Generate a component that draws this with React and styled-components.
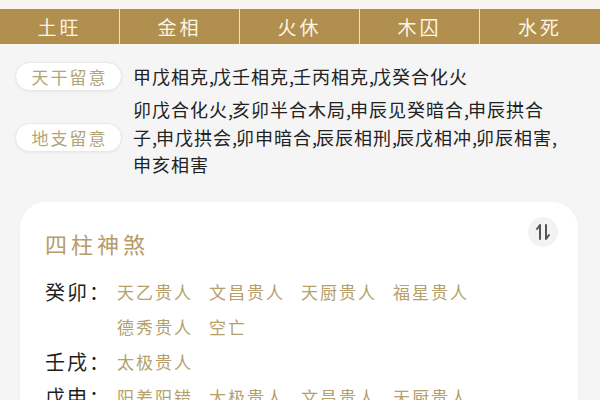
import React from 'react';
import styled, { createGlobalStyle } from 'styled-components';

const GlobalStyle = createGlobalStyle`
  html, body {
    margin: 0;
    padding: 0;
    background: #f5f5f5;
  }
  body {
    font-family: "Noto Sans CJK SC", "Noto Sans", sans-serif;
    color: #333;
  }
`;

const seasons = ['土旺', '金相', '火休', '木囚', '水死'];

const notes = [
  { label: '天干留意', text: '甲戊相克,戊壬相克,壬丙相克,戊癸合化火' },
  {
    label: '地支留意',
    text: '卯戊合化火,亥卯半合木局,申辰见癸暗合,申辰拱合子,申戊拱会,卯申暗合,辰辰相刑,辰戊相冲,卯辰相害,申亥相害',
  },
];

const pillars = [
  { stem: '癸卯', stars: ['天乙贵人', '文昌贵人', '天厨贵人', '福星贵人', '德秀贵人', '空亡'] },
  { stem: '壬戌', stars: ['太极贵人'] },
  { stem: '戊申', stars: ['阳差阳错', '太极贵人', '文昌贵人', '天厨贵人'] },
];

const Page = styled.div`
  width: 600px;
  height: 400px;
  overflow: hidden;
`;

const TopStrip = styled.div`
  height: 9px;
  background: #f7f4f1;
`;

const SeasonBar = styled.div`
  display: grid;
  grid-template-columns: repeat(5, 1fr);
  height: 35px;
  background: #b08f4f;
`;

const SeasonCell = styled.div`
  display: flex;
  align-items: center;
  justify-content: center;
  color: #fdf5e2;
  font-size: 19px;
  letter-spacing: 3px;
  border-right: 1px solid #efe0bb;
  &:last-child {
    border-right: none;
  }
`;

const Notes = styled.div`
  display: flex;
  flex-direction: column;
  gap: 5px;
  padding: 18px 0 0 15px;
`;

const NoteRow = styled.div`
  display: flex;
  align-items: center;
  gap: 11px;
`;

const Pill = styled.div`
  flex: none;
  width: 107px;
  height: 29px;
  box-sizing: border-box;
  display: flex;
  align-items: center;
  justify-content: center;
  border-radius: 15px;
  background: #fff;
  border: 1px solid #e8e8e8;
  box-shadow: 0 1px 3px rgba(0, 0, 0, 0.05);
  color: #b3a57a;
  font-size: 17px;
  letter-spacing: 2px;
  padding-left: 2px;
`;

const NoteText = styled.div`
  max-width: 431px;
  font-size: 18px;
  letter-spacing: 1px;
  line-height: 27.5px;
  color: #222;
`;

const Comma = styled.span`
  letter-spacing: -1px;
`;

const Card = styled.div`
  margin: 23px 22px 0 20px;
  padding: 26px 20px 0 25px;
  background: #fff;
  border-radius: 26px;
  box-shadow: 0 1px 4px rgba(0, 0, 0, 0.03);
  min-height: 300px;
`;

const CardHead = styled.div`
  display: flex;
  justify-content: space-between;
  align-items: flex-start;
  margin-bottom: 16px;
`;

const CardTitle = styled.div`
  font-size: 22px;
  letter-spacing: 4px;
  line-height: 30px;
  color: #b59c68;
`;

const SortButton = styled.button`
  width: 30px;
  height: 30px;
  margin-top: -11px;
  border: none;
  padding: 0;
  border-radius: 50%;
  background: #f3f3f3;
  display: flex;
  align-items: center;
  justify-content: center;
`;

const PillarRow = styled.div`
  display: flex;
  align-items: flex-start;
`;

const Stem = styled.div`
  flex: none;
  width: 72px;
  font-size: 20px;
  letter-spacing: 2px;
  line-height: 35px;
  color: #1e1e1e;
`;

const Stars = styled.div`
  display: flex;
  flex-wrap: wrap;
  column-gap: 16px;
  max-width: 380px;
`;

const Star = styled.span`
  font-size: 17px;
  letter-spacing: 2px;
  line-height: 35px;
  color: #b5a06c;
`;

const HarpoonIcon = () => (
  <svg width="16" height="18" viewBox="0 0 16 18" fill="none" stroke="#555" strokeWidth="2" strokeLinecap="round" strokeLinejoin="round">
    <path d="M5 2v14M5 2L2 6" />
    <path d="M11 2v14M11 16l3-4" />
  </svg>
);

// commas sit a bit tighter than the characters around them
const withCommas = (text) =>
  text.split(',').map((part, i, all) => (
    <React.Fragment key={i}>
      {part}
      {i < all.length - 1 && <Comma>,</Comma>}
    </React.Fragment>
  ));

export default function App() {
  return (
    <Page>
      <GlobalStyle />
      <TopStrip />
      <SeasonBar>
        {seasons.map((s) => (
          <SeasonCell key={s}>{s}</SeasonCell>
        ))}
      </SeasonBar>
      <Notes>
        {notes.map((n) => (
          <NoteRow key={n.label}>
            <Pill>{n.label}</Pill>
            <NoteText>{withCommas(n.text)}</NoteText>
          </NoteRow>
        ))}
      </Notes>
      <Card>
        <CardHead>
          <CardTitle>四柱神煞</CardTitle>
          <SortButton aria-label="排序">
            <HarpoonIcon />
          </SortButton>
        </CardHead>
        {pillars.map((p) => (
          <PillarRow key={p.stem}>
            <Stem>{p.stem}：</Stem>
            <Stars>
              {p.stars.map((s) => (
                <Star key={s}>{s}</Star>
              ))}
            </Stars>
          </PillarRow>
        ))}
      </Card>
    </Page>
  );
}
